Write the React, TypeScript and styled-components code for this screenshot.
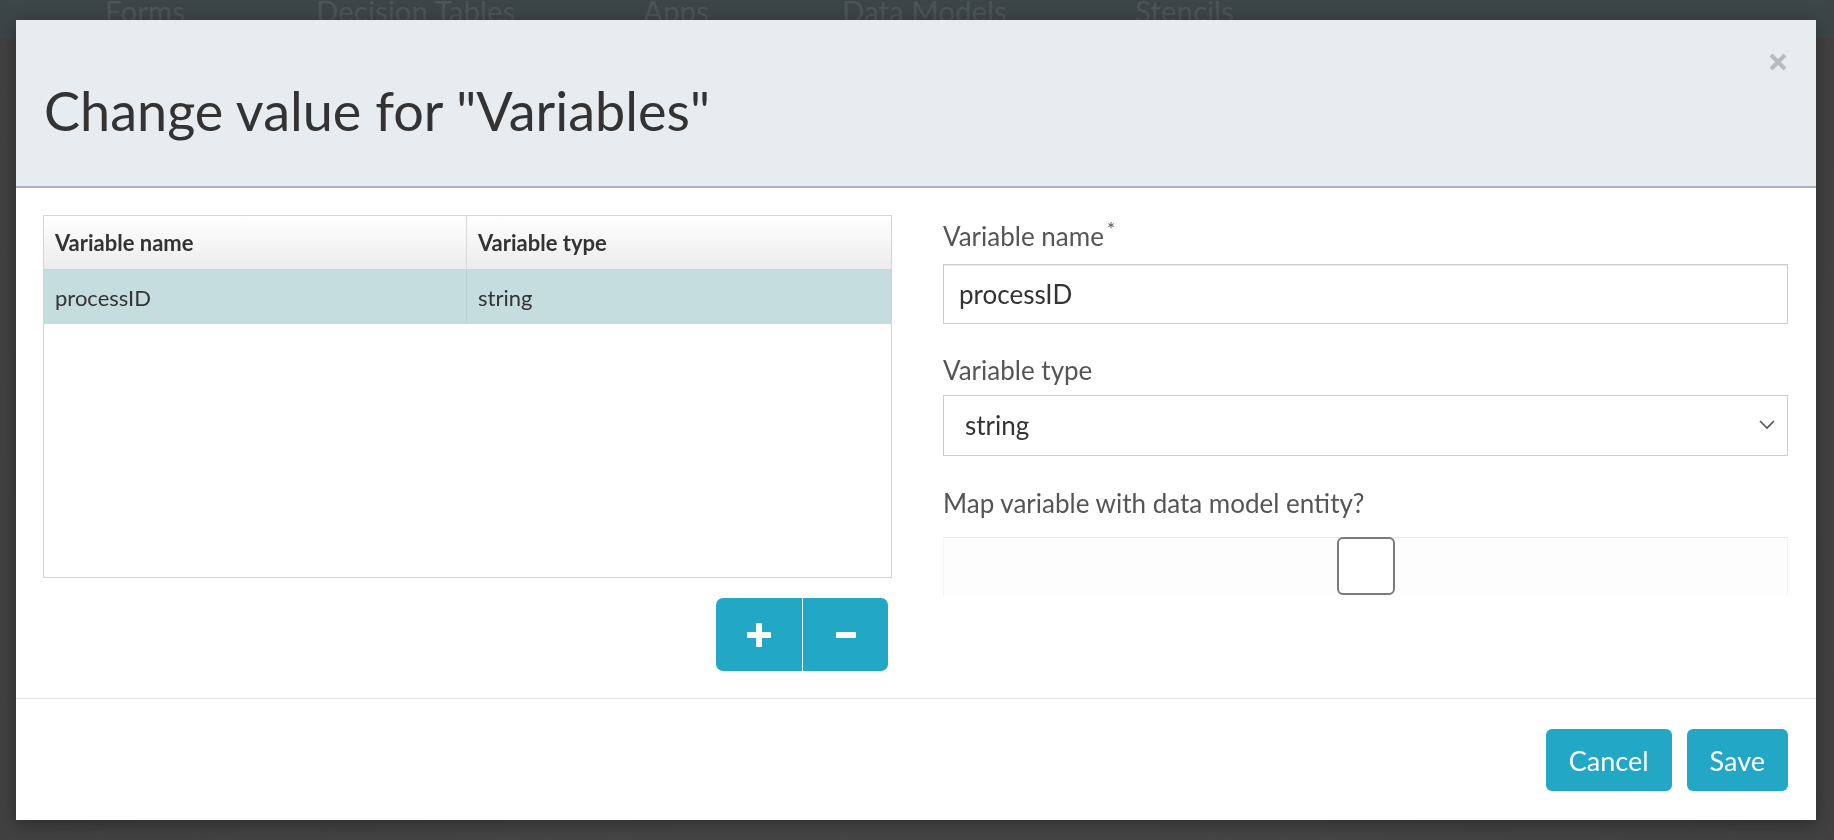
import React from 'react'
import styled, { createGlobalStyle } from 'styled-components'

const GlobalStyle = createGlobalStyle`
  html, body {
    margin: 0;
    padding: 0;
    height: 100%;
    background: #444546;
    font-family: Lato, 'Open Sans', 'Liberation Sans', sans-serif;
  }
  * {
    box-sizing: border-box;
  }
`

const Page = styled.div`
  width: 1834px;
  height: 840px;
  overflow: hidden;
  background: radial-gradient(circle at 50% 50%, #4a4a4a, #414141);
`

const NavBar = styled.div`
  height: 38px;
  background: #3d4647;
  overflow: hidden;
`

const NavList = styled.ul`
  display: flex;
  margin: -7px 0 0;
  padding: 0 0 0 105px;
  list-style: none;
`

const NavItem = styled.li<{ $width: number }>`
  width: ${({ $width }) => $width}px;
  font-size: 29.5px;
  line-height: 1.2;
  color: #4e5556;
  white-space: nowrap;
`

const Modal = styled.div`
  position: fixed;
  top: 20px;
  left: 16px;
  width: 1800px;
  height: 800px;
  background: #fff;
  display: flex;
  flex-direction: column;
  box-shadow: 0 4px 18px rgba(0, 0, 0, 0.35);
`

const Header = styled.div`
  position: relative;
  height: 168px;
  padding: 61px 28px 0;
  background: #e7ecf0;
  border-bottom: 2px solid #a9b3c5;
`

const Title = styled.h1`
  margin: 0;
  font-size: 54px;
  line-height: 1.1;
  font-weight: 400;
  color: #333;
`

const CloseButton = styled.button`
  position: absolute;
  top: 33px;
  right: 29px;
  width: 18px;
  height: 18px;
  padding: 0;
  border: 0;
  background: none;
  cursor: pointer;
  display: flex;
`

const Body = styled.div`
  display: grid;
  grid-template-columns: 849px 845px;
  column-gap: 51px;
  padding: 27px 28px 27px 27px;
  border-bottom: 1px solid #e5e5e5;
`

const LeftColumn = styled.div`
  display: flex;
  flex-direction: column;
`

const Table = styled.div`
  height: 363px;
  border: 1px solid #d4d4d4;
  font-size: 22px;
  color: #333;
`

const Row = styled.div<{ $head?: boolean; $selected?: boolean }>`
  display: grid;
  grid-template-columns: 423px 1fr;
  height: 54px;
  font-weight: ${({ $head }) => ($head ? 700 : 400)};
  background: ${({ $head, $selected }) =>
    $head ? 'linear-gradient(#ffffff, #ececec)' : $selected ? '#c6dde0' : 'transparent'};
  border-bottom: ${({ $head }) => ($head ? '1px solid #d2d2d2' : '0')};
  box-shadow: ${({ $head }) => ($head ? '0 1px 0 #fff' : 'none')};
`

const Cell = styled.div<{ $divider?: string }>`
  display: flex;
  align-items: center;
  padding-left: 11px;
  border-right: ${({ $divider }) => ($divider ? `1px solid ${$divider}` : '0')};
`

const ButtonGroup = styled.div`
  display: flex;
  align-self: flex-end;
  margin: 20px 4px 0 0;
`

const IconButton = styled.button<{ $side: 'left' | 'right' }>`
  width: 86px;
  height: 73px;
  border: 0;
  padding: 0;
  background: #22a7c4;
  display: flex;
  align-items: center;
  justify-content: center;
  cursor: pointer;
  border-radius: ${({ $side }) => ($side === 'left' ? '7px 0 0 7px' : '0 7px 7px 0')};
  border-left: ${({ $side }) => ($side === 'right' ? '1px solid #e9f6f9' : '0')};
`

const Form = styled.div`
  display: flex;
  flex-direction: column;
`

const Label = styled.label<{ $gap: number }>`
  margin-top: ${({ $gap }) => $gap}px;
  font-size: 26px;
  line-height: 40px;
  color: #555;
  sup {
    font-size: 19px;
    margin-left: 3px;
  }
`

const TextInput = styled.div<{ $gap: number }>`
  margin-top: ${({ $gap }) => $gap}px;
  height: 60px;
  border: 1px solid #cccccc;
  box-shadow: inset 0 1px 1px rgba(0, 0, 0, 0.075);
  display: flex;
  align-items: center;
  padding-left: 15px;
  font-size: 26px;
  color: #333;
`

const Select = styled(TextInput)`
  height: 61px;
  padding: 0 12px 0 21px;
  justify-content: space-between;
  box-shadow: none;
`

const CheckboxWrap = styled.div`
  margin-top: 14px;
  height: 60px;
  background: #fdfdfd;
  border-top: 1px solid #e9e9e9;
  border-left: 1px solid #f4f4f4;
  border-right: 1px solid #f4f4f4;
  display: flex;
  justify-content: center;
`

const Checkbox = styled.span`
  margin-top: -1px;
  width: 58px;
  height: 58px;
  border: 2px solid #7a7a7a;
  border-radius: 6px;
  background: #fff;
`

const Footer = styled.div`
  display: flex;
  justify-content: flex-end;
  gap: 15px;
  padding: 30px 28px 0;
`

const ActionButton = styled.button`
  height: 62px;
  padding: 0 23px;
  border: 0;
  border-radius: 6px;
  background: #22a7c4;
  color: #fff;
  font-family: inherit;
  font-size: 27px;
  cursor: pointer;
`

const navItems = [
  { label: 'Forms', width: 211 },
  { label: 'Decision Tables', width: 327 },
  { label: 'Apps', width: 199 },
  { label: 'Data Models', width: 293 },
  { label: 'Stencils', width: 200 },
]

const App: React.FC = () => {
  return (
    <>
      <GlobalStyle />
      <Page>
        <NavBar>
          <NavList>
            {navItems.map((item) => (
              <NavItem key={item.label} $width={item.width}>
                {item.label}
              </NavItem>
            ))}
          </NavList>
        </NavBar>
      </Page>
      <Modal>
        <Header>
          <Title>Change value for "Variables"</Title>
          <CloseButton aria-label="Close">
            <svg width="18" height="18" viewBox="0 0 18 18">
              <path d="M2 2L16 16M16 2L2 16" stroke="#b8bcbf" strokeWidth="4" />
            </svg>
          </CloseButton>
        </Header>
        <Body>
          <LeftColumn>
            <Table>
              <Row $head>
                <Cell $divider="#d9d9d9">Variable name</Cell>
                <Cell>Variable type</Cell>
              </Row>
              <Row $selected>
                <Cell $divider="#bcd3d6">processID</Cell>
                <Cell>string</Cell>
              </Row>
            </Table>
            <ButtonGroup>
              <IconButton $side="left" aria-label="Add">
                <svg width="24" height="24" viewBox="0 0 24 24">
                  <rect x="9" y="0" width="6" height="24" rx="1" fill="#fff" />
                  <rect x="0" y="9" width="24" height="6" rx="1" fill="#fff" />
                </svg>
              </IconButton>
              <IconButton $side="right" aria-label="Remove">
                <svg width="20" height="6" viewBox="0 0 20 6">
                  <rect x="0" y="0" width="20" height="6" rx="1" fill="#fff" />
                </svg>
              </IconButton>
            </ButtonGroup>
          </LeftColumn>
          <Form>
            <Label $gap={-6}>
              Variable name<sup>*</sup>
            </Label>
            <TextInput $gap={8}>processID</TextInput>
            <Label $gap={26}>Variable type</Label>
            <Select $gap={5}>
              <span>string</span>
              <svg width="16" height="10" viewBox="0 0 16 10">
                <path d="M1 1L8 8L15 1" fill="none" stroke="#555" strokeWidth="1.6" />
              </svg>
            </Select>
            <Label $gap={27}>Map variable with data model entity?</Label>
            <CheckboxWrap>
              <Checkbox />
            </CheckboxWrap>
          </Form>
        </Body>
        <Footer>
          <ActionButton>Cancel</ActionButton>
          <ActionButton>Save</ActionButton>
        </Footer>
      </Modal>
    </>
  )
}

export default App
